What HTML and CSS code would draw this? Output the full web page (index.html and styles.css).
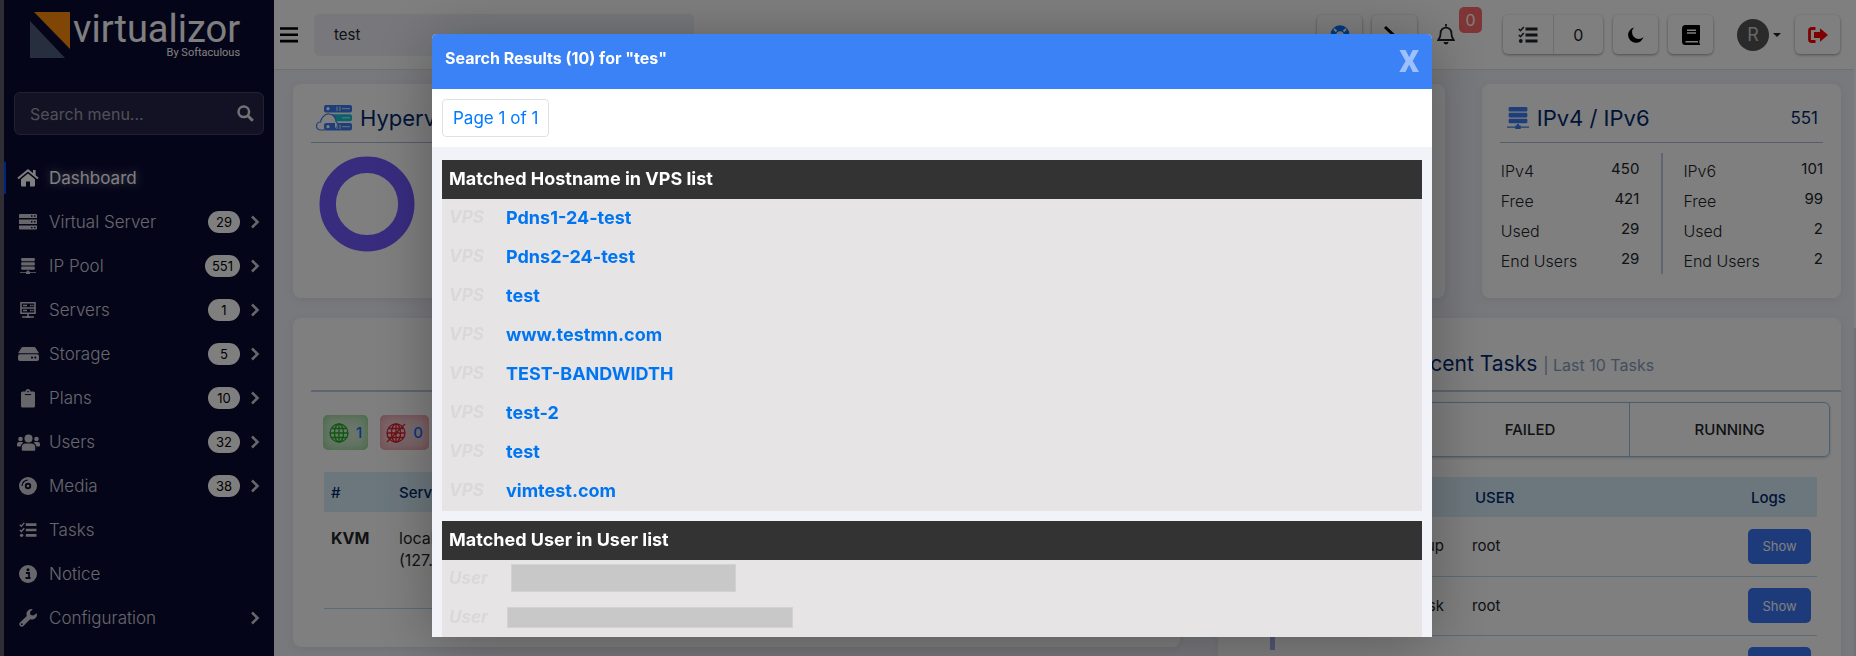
FILE: index.html
```html
<!DOCTYPE html>
<html lang="en">
<head>
	<meta charset="utf-8">
	<meta name="viewport" content="width=device-width, initial-scale=1">
	<title>Virtualizor</title>
	<link rel="stylesheet" href="styles.css">
</head>
<body>
<svg class="sprite" aria-hidden="true">
	<symbol id="chev" viewBox="0 0 10 14"><path d="M2 1.500l5.500 5.500L2 12.500" fill="none" stroke="currentColor" stroke-width="2.600"/></symbol>
	<symbol id="tasks" viewBox="0 0 20 18"><path d="M7.500 1.500h12v3h-12zM7.500 7.500h12v3h-12zM7.500 13.500h12v3h-12z" fill="currentColor"/><path d="M.8 3l1.700 1.700L5.800 1M.8 9l1.700 1.700L5.800 7" fill="none" stroke="currentColor" stroke-width="1.600"/><circle cx="2.800" cy="15" r="1.900" fill="currentColor"/></symbol>
	<symbol id="pool" viewBox="0 0 20 20"><path d="M2.500 0h15a1 1 0 0 1 1 1v2.200a1 1 0 0 1-1 1h-15a1 1 0 0 1-1-1V1a1 1 0 0 1 1-1zM2.500 5.300h15a1 1 0 0 1 1 1v2.200a1 1 0 0 1-1 1h-15a1 1 0 0 1-1-1V6.300a1 1 0 0 1 1-1zM2.500 10.600h15a1 1 0 0 1 1 1v2.200a1 1 0 0 1-1 1h-15a1 1 0 0 1-1-1v-2.200a1 1 0 0 1 1-1zM0 17.800h7.500v-1h1.500v-1.300h2v1.300h1.500v1H20v1h-7.500V20h-5v-1.200H0z" fill="currentColor"/></symbol>
</svg>

<div class="shell">
	<aside class="sidebar">
		<div class="logo">
			<svg width="42" height="48" viewBox="0 0 42 48"><path d="M4 1h36v37z" fill="#ff8c0a"/><path d="M0 10v37h35z" fill="#4f5f7f"/></svg>
			<div class="logo_text">
				<span class="brand">virtualizor</span>
				<span class="by">By Softaculous</span>
			</div>
		</div>
		<form class="menu_search">
			<input type="text" placeholder="Search menu..." aria-label="Search menu">
			<svg width="17" height="17" viewBox="0 0 17 17"><circle cx="6.800" cy="6.800" r="5.300" fill="none" stroke="#e4e4e8" stroke-width="2.500"/><path d="M10.800 10.800l5 5" stroke="#e4e4e8" stroke-width="3"/></svg>
		</form>
		<ul class="menu">
			<li class="active"><svg width="22" height="18" viewBox="0 0 22 18"><path d="M1 9.500L11 1.300l10 8.200" fill="none" stroke="currentColor" stroke-width="2"/><path d="M16 1h2.600v6L16 5z" fill="currentColor"/><path d="M4 10.300L11 4.600l7 5.700V16.500a1 1 0 0 1-1 1h-4v-5H9v5H5a1 1 0 0 1-1-1z" fill="currentColor"/></svg><a href="#">Dashboard</a></li>
			<li><svg width="18" height="18" viewBox="0 0 18 18"><path d="M1 1h16a1 1 0 0 1 1 1v3H0V2a1 1 0 0 1 1-1zM0 6.500h18v4.600H0zM0 12.600h18v3a1 1 0 0 1-1 1H1a1 1 0 0 1-1-1z" fill="currentColor"/><path d="M12 3h1.500M15 3h1.500M12 8.800h1.500M15 8.800h1.500M12 14.600h1.500M15 14.600h1.500" stroke="#0a0a35" stroke-width="1.400"/></svg><a href="#">Virtual Server</a><span class="count">29</span><svg class="chev"><use href="#chev"/></svg></li>
			<li><svg width="16" height="16"><use href="#pool"/></svg><a href="#">IP Pool</a><span class="count">551</span><svg class="chev"><use href="#chev"/></svg></li>
			<li><svg width="18" height="18" viewBox="0 0 18 18"><path d="M2 1.800h14v10.500H2zM2 7h14M9 12v4M3 16h12" fill="none" stroke="currentColor" stroke-width="1.600"/><path d="M4 4.500h4M11 4.500h1.500M13.300 4.500h1.200M4 9.600h4M11 9.600h1.500M13.300 9.600h1.200M7 16h4" stroke="currentColor" stroke-width="1.500"/></svg><a href="#">Servers</a><span class="count">1</span><svg class="chev"><use href="#chev"/></svg></li>
			<li><svg width="21" height="16" viewBox="0 0 21 16"><path d="M5 1h11a2 2 0 0 1 1.700 1L21 7.200H0L3.300 2A2 2 0 0 1 5 1zM2 8.200h17a2 2 0 0 1 2 2V13a2 2 0 0 1-2 2H2a2 2 0 0 1-2-2v-2.800a2 2 0 0 1 2-2z" fill="currentColor"/><circle cx="14" cy="11.600" r="1.100" fill="#0a0a35"/><circle cx="17.300" cy="11.600" r="1.100" fill="#0a0a35"/></svg><a href="#">Storage</a><span class="count">5</span><svg class="chev"><use href="#chev"/></svg></li>
			<li><svg width="14" height="19" viewBox="0 0 14 19"><path d="M1.500 2.500h3a2.500 2.500 0 0 1 5 0h3A1.500 1.500 0 0 1 14 4v13a1.500 1.500 0 0 1-1.500 1.500h-11A1.500 1.500 0 0 1 0 17V4a1.500 1.500 0 0 1 1.500-1.500z" fill="currentColor"/><path d="M3.800 5.600h6.400" stroke="#0a0a35"/><circle cx="7" cy="2.600" r=".8" fill="#0a0a35"/></svg><a href="#">Plans</a><span class="count">10</span><svg class="chev"><use href="#chev"/></svg></li>
			<li><svg width="23" height="17" viewBox="0 0 23 17" fill="currentColor"><circle cx="11.500" cy="4.500" r="4"/><circle cx="3.500" cy="5" r="2.300"/><circle cx="19.500" cy="5" r="2.300"/><path d="M4.800 16v-2.500a4 4 0 0 1 4-4h5.400a4 4 0 0 1 4 4V16a.8.8 0 0 1-.8.8H5.600a.8.800 0 0 1-.8-.8zM0 11.500V10a2 2 0 0 1 2-2h3a2 2 0 0 1 1.400.6 6 6 0 0 0-2.800 3.900H1a1 1 0 0 1-1-1zM23 11.500V10a2 2 0 0 0-2-2h-3a2 2 0 0 0-1.400.6 6 6 0 0 1 2.800 3.900H22a1 1 0 0 0 1-1z"/></svg><a href="#">Users</a><span class="count">32</span><svg class="chev"><use href="#chev"/></svg></li>
			<li><svg width="18" height="18" viewBox="0 0 18 18"><circle cx="9" cy="9" r="9" fill="currentColor"/><circle cx="9" cy="9" r="3.200" fill="#0a0a35"/><circle cx="9" cy="9" r="1.300" fill="currentColor"/><path d="M3 9a6 6 0 0 1 6-6" fill="none" stroke="#0a0a35" stroke-width="1.200"/></svg><a href="#">Media</a><span class="count">38</span><svg class="chev"><use href="#chev"/></svg></li>
			<li><svg width="18" height="16"><use href="#tasks"/></svg><a href="#">Tasks</a></li>
			<li><svg width="18" height="18" viewBox="0 0 18 18"><circle cx="9" cy="9" r="9" fill="currentColor"/><path d="M7 8h3v4.500M6.500 13h5" fill="none" stroke="#0a0a35" stroke-width="1.800"/><circle cx="9" cy="4.700" r="1.500" fill="#0a0a35"/></svg><a href="#">Notice</a></li>
			<li><svg width="18" height="18" viewBox="0 0 18 18"><path d="M17.700 4.200a5 5 0 0 1-6.600 6L4.400 17a2 2 0 0 1-3.300-.2A2 2 0 0 1 1 13.600l6.800-6.700a5 5 0 0 1 6-6.600l-2.800 2.800.5 3 3 .5z" fill="currentColor"/><circle cx="2.800" cy="15.200" r=".9" fill="#0a0a35"/></svg><a href="#">Configuration</a><svg class="chev"><use href="#chev"/></svg></li>
		</ul>
	</aside>

	<div class="main">
		<header class="topbar">
			<button class="bars" aria-label="Toggle menu"><svg width="18" height="16" viewBox="0 0 18 16"><path d="M0 1.500h18M0 7.800h18M0 14.100h18" stroke="#000" stroke-width="2.600"/></svg></button>
			<input class="search" type="text" value="test" aria-label="Search">
			<div class="tools">
				<button class="tool" aria-label="Support"><svg width="20" height="20" viewBox="0 0 20 20"><circle cx="10" cy="10" r="6.700" fill="none" stroke="#0078ff" stroke-width="6"/><path d="M6.500 6.500L4 4M13.500 6.500L16 4M6.500 13.500L4 16M13.500 13.500l2.500 2.500" stroke="#fff" stroke-width="2"/></svg></button>
				<button class="tool" aria-label="Terminal"><svg width="24" height="20" viewBox="0 0 24 20"><path d="M2 2l8 7.500L2 17M11 17h11" fill="none" stroke="#000" stroke-width="3"/></svg></button>
				<button class="bell" aria-label="Notifications"><svg width="18" height="21" viewBox="0 0 18 21"><path d="M9 0v2.500M3.600 9a5.400 5.400 0 0 1 10.800 0c0 4.500 1.500 5.500 2.300 7H1.300c.8-1.500 2.300-2.500 2.300-7z" fill="none" stroke="#222" stroke-width="1.800"/><path d="M6.500 18h5a2.500 2.500 0 0 1-5 0z" fill="#222"/></svg><span class="alert">0</span></button>
				<div class="pair">
					<button aria-label="Task list"><svg width="20" height="18"><use href="#tasks"/></svg></button>
					<button>0</button>
				</div>
				<button class="tool" aria-label="Dark mode"><svg width="16" height="16" viewBox="0 0 16 16"><path d="M6 .5a6.500 6.500 0 0 0 9.500 9.500A7.800 7.800 0 1 1 6 .5z"/></svg></button>
				<button class="tool" aria-label="Docs"><svg width="18" height="20" viewBox="0 0 18 20"><path d="M3.500 0H17a1 1 0 0 1 1 1v13.500a1 1 0 0 1-.6.900v3.200h.6V20H3.500A3.500 3.500 0 0 1 0 16.500v-13A3.500 3.500 0 0 1 3.500 0z"/><path d="M5 5.300h9M5 8h9M3.500 16.700h12.500" stroke="#fff" stroke-width="1.500"/></svg></button>
				<button class="user" aria-label="Account"><span class="avatar">R</span><i class="caret"></i></button>
				<button class="tool" aria-label="Log out"><svg width="20" height="16" viewBox="0 0 20 16"><path d="M7.500 1.500h-4a2 2 0 0 0-2 2v9a2 2 0 0 0 2 2h4" fill="none" stroke="#f00" stroke-width="2.800"/><path d="M12 1.200L20 8l-8 6.800V11H6V5h6z" fill="#f00"/></svg></button>
			</div>
		</header>

		<div class="content">
			<div class="cards">
				<section class="card">
					<div class="card_head">
						<svg width="36" height="26" viewBox="0 0 36 26"><rect x="8" y="0" width="28" height="7.500" rx="2" fill="#3b7df0"/><rect x="15" y="9.300" width="21" height="7" rx="2" fill="#16c4d8"/><rect x="8" y="18" width="28" height="7.500" rx="2" fill="#3b7df0"/><path d="M9 25H4.500a4 4 0 0 1 0-8C5 13 9 8.500 13 9c4 0 7 3.500 7 7.500 2 1 2 5 0 6" fill="#fff" stroke="#3b7df0" stroke-width="1.200"/><path d="M10 18h9v7h-9a2 2 0 0 1-2-2v-3a2 2 0 0 1 2-2z" fill="#3b7df0"/><circle cx="12" cy="3.700" r="1.600" fill="#fff"/><circle cx="12" cy="21.700" r="1.600" fill="#fff"/><path d="M21 1.500v4.500M24 1.500v4.500M21 19.500V24M24 19.500V24M26 3.700h8M26 12.800h8M26 21.700h8" stroke="#dce8ff"/></svg>
						<h2>Hypervisor</h2>
					</div>
					<svg class="donut" width="96" height="96" viewBox="0 0 96 96"><circle cx="48" cy="48" r="39.300" fill="none" stroke="#7158ff" stroke-width="16.400"/></svg>
				</section>
				<section class="card"></section>
				<section class="card"></section>
				<section class="card">
					<div class="card_head ip_head">
						<svg width="22" height="22"><use href="#pool"/></svg>
						<h2>IPv4 / IPv6</h2>
						<span class="total">551</span>
					</div>
					<div class="ips">
						<dl>
							<dt>IPv4</dt><dd>450</dd>
							<dt>Free</dt><dd>421</dd>
							<dt>Used</dt><dd>29</dd>
							<dt>End Users</dt><dd>29</dd>
						</dl>
						<dl>
							<dt>IPv6</dt><dd>101</dd>
							<dt>Free</dt><dd>99</dd>
							<dt>Used</dt><dd>2</dd>
							<dt>End Users</dt><dd>2</dd>
						</dl>
					</div>
				</section>
			</div>

			<div class="panels">
				<section class="card servers">
					<div class="panel_head"></div>
					<div class="states">
						<span class="state up"><svg width="20" height="20" viewBox="0 0 20 20" fill="none" stroke="#1fae1f" stroke-width="1.300"><circle cx="10" cy="10" r="9"/><ellipse cx="10" cy="10" rx="4.500" ry="9"/><path d="M10 1v18M1 10h18M2.500 5.500h15M2.500 14.500h15"/></svg>1</span>
						<span class="state down"><svg width="20" height="20" viewBox="0 0 20 20" fill="none" stroke="#e01e2e" stroke-width="1.300"><circle cx="10" cy="10" r="9"/><ellipse cx="10" cy="10" rx="4.500" ry="9"/><path d="M10 1v18M1 10h18M2.500 5.500h15M2.500 14.500h15M1 19L19 1"/></svg>0</span>
					</div>
					<table class="list">
						<tr><th class="type">#</th><th>Server</th></tr>
						<tr class="host"><td class="type"><b>KVM</b></td><td>localhost<br>(127.0.0.1)</td></tr>
					</table>
				</section>
				<section class="card recent">
					<div class="panel_head"><h2>Recent Tasks <small>| Last 10 Tasks</small></h2></div>
					<div class="tabs">
						<button>ALL</button>
						<button>FAILED</button>
						<button>RUNNING</button>
					</div>
					<table class="list">
						<tr><th class="task"></th><th class="who">USER</th><th class="logs">Logs</th></tr>
						<tr><td class="task">Backup</td><td>root</td><td class="logs"><button class="show">Show</button></td></tr>
						<tr><td class="task">Add disk</td><td>root</td><td class="logs"><button class="show">Show</button></td></tr>
						<tr><td class="task"><span class="mark"></span></td><td>root</td><td class="logs"><button class="show">Show</button></td></tr>
					</table>
				</section>
			</div>
		</div>
	</div>
	<div class="track"><div class="thumb"></div></div>
</div>

<div class="backdrop">
	<div class="modal" role="dialog" aria-labelledby="resultTitle">
		<div class="modal_head">
			<h5 id="resultTitle">Search Results (10) for "tes"</h5>
			<button class="close" aria-label="Close">X</button>
		</div>
		<div class="pager"><a href="#">Page 1 of 1</a></div>
		<div class="results">
			<table>
				<tr><th colspan="2">Matched Hostname in VPS list</th></tr>
				<tr><td class="kind">VPS</td><td><a href="#">Pdns1-24-test</a></td></tr>
				<tr><td class="kind">VPS</td><td><a href="#">Pdns2-24-test</a></td></tr>
				<tr><td class="kind">VPS</td><td><a href="#">test</a></td></tr>
				<tr><td class="kind">VPS</td><td><a href="#">www.testmn.com</a></td></tr>
				<tr><td class="kind">VPS</td><td><a href="#">TEST-BANDWIDTH</a></td></tr>
				<tr><td class="kind">VPS</td><td><a href="#">test-2</a></td></tr>
				<tr><td class="kind">VPS</td><td><a href="#">test</a></td></tr>
				<tr><td class="kind">VPS</td><td><a href="#">vimtest.com</a></td></tr>
			</table>
			<table>
				<tr><th colspan="2">Matched User in User list</th></tr>
				<tr><td class="kind">User</td><td><span class="mask mask_a"></span></td></tr>
				<tr><td class="kind">User</td><td><span class="mask mask_b"></span></td></tr>
			</table>
		</div>
	</div>
</div>
</body>
</html>
```
FILE: styles.css
```css
*{
	margin: 0;
	padding: 0;
	box-sizing: border-box;
}
body{
	height: 100vh;
	overflow: hidden;
	font-family: Inter, "Liberation Sans", sans-serif;
	font-size: 15px;
	color: #212529;
	background-color: #f1f2f9;
}
button, input{
	font: inherit;
	color: inherit;
	border: 0;
	background: none;
}
a{
	color: inherit;
	text-decoration: none;
}
svg{
	display: block;
	flex: none;
}
table{
	border-collapse: collapse;
	width: 100%;
}
.sprite{
	display: none;
}
.shell{
	display: flex;
	height: 100vh;
	overflow: hidden;
}

/* sidebar */
.sidebar{
	flex: none;
	width: 274px;
	border-left: 4px solid #5c5c68;
	background-color: #0a0a35;
	color: #cfcfd6;
}
.logo{
	display: flex;
	padding: 11px 0 0 26px;
	height: 92px;
	font-family: Roboto, sans-serif;
	color: #fff;
}
.logo_text{
	display: flex;
	flex-direction: column;
	align-items: flex-end;
	padding-left: 1px;
}
.brand{
	font-size: 38px;
	line-height: 36px;
}
.by{
	font-size: 11px;
	line-height: 12px;
}
.menu_search{
	display: flex;
	align-items: center;
	height: 43px;
	margin: 0 10px;
	padding: 0 9px 0 15px;
	border: 1px solid #44445c;
	border-radius: 6px;
	background-color: #242448;
	font-size: 16px;
}
.menu_search input{
	flex: 1;
	min-width: 0;
}
.menu_search input::placeholder{
	color: #a0a0b0;
}
.menu{
	list-style: none;
	padding-top: 21px;
}
.menu li{
	display: grid;
	grid-template-columns: 28px 1fr auto 10px;
	align-items: center;
	column-gap: 10px;
	height: 44px;
	padding: 0 14px 0 10px;
	font-size: 17px;
	font-weight: 300;
}
.menu li > svg:first-child{
	justify-self: center;
}
.menu a{
	margin-left: -3px;
}
.menu .active{
	color: #fff;
	font-weight: 400;
	text-shadow: 0 0 10px rgba(255, 255, 255, 0.6);
	background: linear-gradient(#0046ff, #0046ff) left center / 2px 32px no-repeat;
}
.count{
	min-width: 32px;
	padding: 0 7px;
	border-radius: 11px;
	background-color: #fff;
	color: #000;
	font-size: 13px;
	font-weight: 400;
	line-height: 22px;
	text-align: center;
}
.chev{
	grid-column: 4;
	width: 10px;
	height: 14px;
}

/* top bar */
.main{
	flex: 1;
	min-width: 0;
}
.topbar{
	display: flex;
	align-items: center;
	height: 70px;
	padding: 0 14px 0 6px;
	border-bottom: 1px solid #e2e3ea;
	background-color: #fff;
}
.bars{
	margin-right: 16px;
}
.search{
	width: 380px;
	height: 42px;
	padding: 0 20px;
	border-radius: 5px;
	background-color: #f0f1f8;
}
.tools{
	display: flex;
	align-items: center;
	gap: 10px;
	margin-left: auto;
}
.tool, .pair{
	display: flex;
	justify-content: center;
	align-items: center;
	width: 45px;
	height: 39px;
	border-radius: 5px;
	box-shadow: 0 1px 3px rgba(0, 0, 0, 0.4);
}
.pair{
	width: 100px;
	font-size: 16px;
}
.pair button{
	display: flex;
	justify-content: center;
	align-items: center;
	flex: 1;
	height: 39px;
}
.pair button + button{
	border-left: 1px solid #ddd;
}
.bell{
	position: relative;
	margin: 0 38px 0 10px;
}
.alert{
	position: absolute;
	left: 22px;
	top: -17px;
	width: 23px;
	border-radius: 5px;
	background-color: #ff6b6b;
	color: #fff;
	font-size: 16px;
	line-height: 26px;
}
.user{
	display: flex;
	align-items: center;
	gap: 4px;
	margin: 0 4px 0 14px;
}
.avatar{
	width: 32px;
	border-radius: 50%;
	background-color: #555;
	color: #ccc;
	font-size: 18px;
	line-height: 32px;
}
.caret{
	border: 4px solid transparent;
	border-top-color: #222;
	border-bottom: 0;
}

/* dashboard */
.content{
	padding: 14px 13px 0 19px;
}
.cards{
	display: grid;
	grid-template-columns: repeat(4, 1fr);
	gap: 37px;
}
.card{
	border-radius: 8px;
	background-color: #fff;
	box-shadow: 0 2px 8px rgba(1, 41, 112, 0.08);
}
.cards .card{
	height: 214px;
	padding: 0 18px;
}
.card h2{
	color: #012970;
	font-size: 22px;
	font-weight: 400;
}
.card_head{
	display: flex;
	align-items: center;
	gap: 8px;
	height: 59px;
	padding: 10px 5px 0;
	border-bottom: 1px solid #aeb9d2;
}
.ip_head{
	padding-left: 7px;
	color: #3b7df0;
}
.total{
	margin-left: auto;
	color: #012970;
	font-size: 17px;
}
.donut{
	margin: 13px 0 0 8px;
}
.ips{
	display: grid;
	grid-template-columns: 1fr 1fr;
	padding-top: 10px;
}
.ips dl{
	display: grid;
	grid-template-columns: 1fr auto;
	grid-auto-rows: 30px;
	padding: 1px 22px 0 1px;
}
.ips dl + dl{
	padding: 1px 0 0 20px;
	border-left: 2px solid #c3cbe4;
}
.ips dt{
	padding-top: 5px;
	font-size: 16px;
	font-weight: 300;
	line-height: 24px;
}
.ips dd{
	padding-top: 3px;
	line-height: 24px;
	text-align: right;
}
.panels{
	display: grid;
	grid-template-columns: 887fr 623fr;
	gap: 38px;
	align-items: start;
	padding-top: 20px;
}
.panel_head{
	display: flex;
	justify-content: center;
	align-items: center;
	height: 74px;
	padding: 18px 18px 0 0;
	margin-left: 18px;
	border-bottom: 2px solid #bcc8e0;
}
.panel_head h2{
	font-size: 21px;
}
.panel_head small{
	color: #899bbd;
	font-size: 16px;
}
.servers{
	height: 329px;
}
.states{
	display: flex;
	gap: 12px;
	padding: 23px 30px 22px;
}
.state{
	display: flex;
	align-items: center;
	gap: 7px;
	height: 35px;
	padding: 0 6px;
	border-radius: 5px;
	color: #0d6efd;
	font-weight: 500;
}
.up{
	background-color: #d3ead3;
	box-shadow: inset 0 0 12px #7fd07f;
}
.down{
	background-color: #f0d3d8;
	box-shadow: inset 0 0 12px #f28a94;
}
.servers .list{
	width: auto;
	margin: 0 31px;
	min-width: 800px;
}
.list th{
	height: 40px;
	padding: 0 7px;
	background-color: #d9effa;
	color: #012970;
	font-weight: 500;
	text-align: left;
}
.list td{
	height: 59px;
	padding: 0 4px;
	border-bottom: 1px solid #b4d9ee;
	line-height: 22px;
}
.list .type{
	width: 68px;
	padding-left: 7px;
}
.list .host td{
	height: 96px;
	padding: 15px 7px 0;
	font-size: 16px;
	vertical-align: top;
}
.tabs{
	display: flex;
	height: 55px;
	margin: 10px 11px 20px 12px;
	border: 1px solid #8fc0e8;
	border-radius: 6px;
	box-shadow: 0 1px 3px rgba(0, 0, 0, 0.2);
}
.tabs button{
	flex: 1;
	font-weight: 500;
}
.tabs button + button{
	border-left: 1px solid #8fc0e8;
}
.recent .list{
	width: auto;
	min-width: 569px;
	margin: 0 24px 0 30px;
}
.list .task{
	width: 220px;
	padding-right: 24px;
	text-align: right;
}
.list .logs{
	width: 73px;
}
.show{
	width: 63px;
	height: 35px;
	border-radius: 5px;
	background-color: #3a76f4;
	color: #fff;
	font-size: 13px;
}
.mark{
	display: block;
	width: 5px;
	height: 58px;
	margin-left: 18px;
	background: linear-gradient(#a9aeea, #a9aeea) top / 5px 14px no-repeat;
}
.track{
	flex: none;
	width: 2px;
	background-color: #e4e5ec;
}
.thumb{
	height: 50%;
	background-color: #fff;
}

/* search results */
.backdrop{
	position: fixed;
	inset: 0;
	display: flex;
	justify-content: center;
	padding: 34px 0 19px;
	background-color: rgba(0, 0, 0, 0.5);
}
.modal{
	display: flex;
	flex-direction: column;
	width: 100%;
	max-width: 1000px;
	margin-left: 8px;
	overflow: hidden;
	border-radius: 5px 5px 0 0;
	background-color: #f1f3f9;
	box-shadow: 0 5px 60px rgba(0, 0, 0, 0.3);
}
.modal_head{
	display: flex;
	flex: none;
	justify-content: space-between;
	height: 55px;
	padding: 13px 13px 0;
	background-color: #3b82f6;
	color: #fff;
}
.modal_head h5{
	font-size: 16px;
	font-weight: 700;
	line-height: 22px;
}
.close{
	font-family: Roboto, sans-serif;
	font-size: 31px;
	font-weight: 900;
	line-height: 30px;
	height: 30px;
	opacity: 0.5;
}
.pager{
	flex: none;
	height: 58px;
	padding: 10px;
	background-color: #fff;
}
.pager a{
	display: inline-block;
	padding: 0 10px;
	border: 1px solid #dee2e6;
	border-radius: 4px;
	color: #007bff;
	font-size: 17px;
	line-height: 36px;
}
.results{
	padding: 13px 10px 0;
}
.results table{
	margin-bottom: 10px;
	background-color: #e6e4e5;
	font-size: 18px;
	font-weight: 700;
}
.results th{
	height: 39px;
	padding: 0 7px 2px;
	background-color: #333;
	color: #fff;
	text-align: left;
}
.results td{
	height: 39px;
	padding-bottom: 3px;
}
.results a{
	color: #0075f2;
}
.results .kind{
	width: 64px;
	padding-left: 7px;
	color: #d9d9d9;
	font-size: 17px;
	font-style: italic;
}
.mask{
	display: block;
	border: 1px solid #d2d2d2;
	background-color: #c8c8c8;
}
.mask_a{
	width: 225px;
	height: 28px;
	margin-left: 5px;
}
.mask_b{
	width: 286px;
	height: 21px;
	margin-left: 1px;
}
```
